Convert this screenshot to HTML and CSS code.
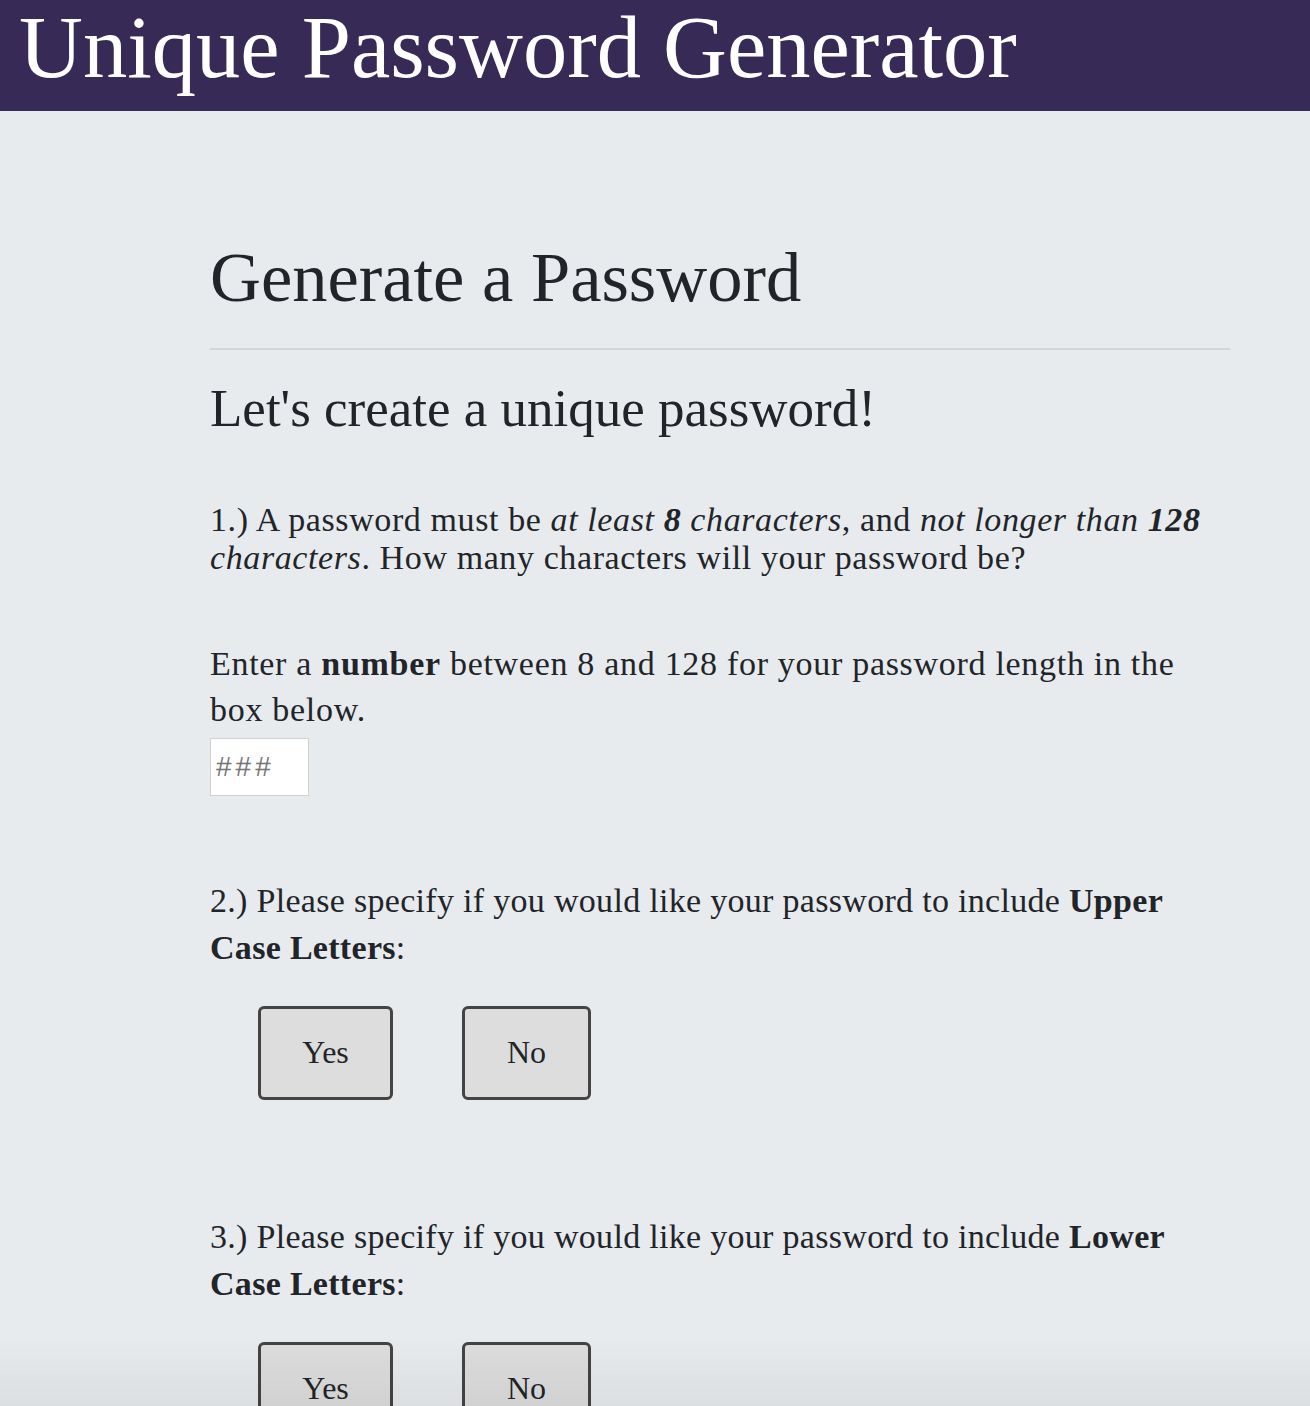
FILE: index.html
```html
<!DOCTYPE html>
<html lang="en">
<head>
<meta charset="utf-8">
<title>Unique Password Generator</title>
<link rel="stylesheet" href="styles.css">
</head>
<body>
<header class="site-header">
  <h1 class="site-title">Unique Password Generator</h1>
</header>
<main class="content">
  <h2 class="page-title">Generate a Password</h2>
  <hr class="divider">
  <h3 class="lead">Let's create a unique password!</h3>

  <section class="question">
    <p class="q-text">1.) A password must be <em>at least <strong>8</strong> characters</em>, and <em>not longer than <strong>128</strong> characters</em>. How many characters will your password be?</p>
    <p class="q-hint">Enter a <strong>number</strong> between 8 and 128 for your password length in the box below.</p>
    <input class="length-input" type="text" placeholder="###">
  </section>

  <section class="question choice">
    <p class="q-label">2.) Please specify if you would like your password to include <strong>Upper Case Letters</strong>:</p>
    <div class="btn-row">
      <button class="btn btn-yes" type="button">Yes</button>
      <button class="btn btn-no" type="button">No</button>
    </div>
  </section>

  <section class="question choice next">
    <p class="q-label">3.) Please specify if you would like your password to include <strong>Lower Case Letters</strong>:</p>
    <div class="btn-row">
      <button class="btn btn-yes" type="button">Yes</button>
      <button class="btn btn-no" type="button">No</button>
    </div>
  </section>
</main>
<div class="bottom-shade"></div>
</body>
</html>
```
FILE: styles.css
```css
html, body {
  margin: 0;
  padding: 0;
}
body {
  background: #e8ebee;
  color: #212529;
  font-family: "Liberation Serif", "Times New Roman", serif;
}
.site-header {
  background: #372a56;
  height: 111px;
  box-sizing: border-box;
  padding: 0 0 17px 19px;
}
.site-title {
  margin: 0;
  font-size: 88.5px;
  line-height: 94px;
  font-weight: normal;
  color: #ffffff;
  white-space: nowrap;
}
.content {
  padding: 0 80px 200px 210px;
}
.page-title {
  margin: 124px 0 0;
  font-size: 70.5px;
  line-height: 84px;
  font-weight: normal;
}
.divider {
  margin: 29px 0 0;
  border: 0;
  height: 2px;
  background: #d3d6d9;
}
.lead {
  margin: 27px 0 0;
  font-size: 53px;
  line-height: 62px;
  font-weight: normal;
}
.question p {
  margin: 0;
  font-size: 34px;
}
.q-text {
  margin-top: 62px !important;
  line-height: 37.5px;
  letter-spacing: 0.6px;
}
.q-hint {
  margin-top: 65px !important;
  line-height: 46px;
  letter-spacing: 0.7px;
  max-width: 975px;
}
.length-input {
  display: block;
  margin: 5px 0 0;
  width: 99px;
  height: 58px;
  box-sizing: border-box;
  border: 1px solid #cfd2d4;
  background: #ffffff;
  padding: 0 0 0 5px;
  font-family: "Liberation Sans", Arial, sans-serif;
  font-size: 28px;
  letter-spacing: 4px;
  color: #333;
}
.length-input::placeholder {
  color: #757575;
}
.q-label {
  line-height: 47px;
  letter-spacing: 0.3px;
}
.choice .q-label {
  margin-top: 81px;
}
.choice.next .q-label {
  margin-top: 113px;
}
.btn-row {
  display: flex;
  gap: 69px;
  margin: 35px 0 0 48px;
}
.btn {
  height: 94px;
  box-sizing: border-box;
  border: 3px solid #444444;
  border-radius: 6px;
  background: #dddddd;
  color: #212529;
  font-family: "Liberation Serif", "Times New Roman", serif;
  font-size: 32px;
  line-height: 36px;
  padding: 0 0 3px;
  text-align: center;
}
.btn-yes {
  width: 135px;
}
.btn-no {
  width: 129px;
}
.bottom-shade {
  position: fixed;
  left: 0;
  right: 0;
  bottom: 0;
  height: 70px;
  background: linear-gradient(to bottom, rgba(0,0,0,0), rgba(0,0,0,0.05));
  pointer-events: none;
}
```
